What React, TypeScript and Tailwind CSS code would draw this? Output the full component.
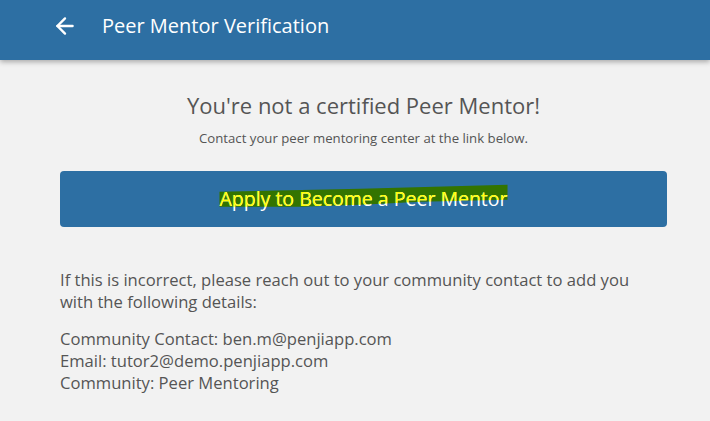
import { ArrowLeft } from 'lucide-react';

const font = { fontFamily: '"Open Sans", Lato, sans-serif' };

// marker-style highlight drawn over the button label
function ApplyButton() {
  const label = 'Apply to Become a Peer Mentor';
  const marker =
    'polygon(0% 8px, 49% 5px, 100% 1px, 100% 16px, 70% 18px, 49% 21px, 28% 23px, 0% 23px)';
  const inner =
    'polygon(0% 3px, 49% 0px, 100% -4px, 100% 11px, 70% 13px, 49% 16px, 28% 18px, 0% 18px)';
  return (
    <button className="w-full h-[56px] rounded-[4px] bg-[#2d6fa3] flex items-center justify-center">
      <span className="relative inline-block text-[19.5px] leading-[20px] text-white whitespace-nowrap">
        <span
          className="absolute left-0 right-0 top-[-5px] h-[24px] bg-[#337400]"
          style={{ clipPath: marker }}
        />
        <span className="relative">{label}</span>
        <span className="absolute inset-0 text-[#ffff00]" style={{ clipPath: inner }}>
          {label}
        </span>
      </span>
    </button>
  );
}

export default function App() {
  return (
    <div className="min-h-[421px] bg-[#f2f2f2] text-[#555]" style={font}>
      <header className="h-[60px] bg-[#2d6fa3] flex items-center shadow-[0_2px_5px_rgba(0,0,0,0.3)]">
        <ArrowLeft className="ml-[52px] -mt-[9px] w-[26px] h-[26px] text-white" strokeWidth={2.2} />
        <h1 className="ml-[24px] text-[20px] text-white -mt-[9px]">Peer Mentor Verification</h1>
      </header>

      <main className="pl-[60px] w-[667px]">
        <h2 className="mt-[31px] text-center text-[22px] leading-[28px]">
          You're not a certified Peer Mentor!
        </h2>
        <p className="mt-[10px] text-center text-[13.2px]">
          Contact your peer mentoring center at the link below.
        </p>

        <div className="mt-[22px]">
          <ApplyButton />
        </div>

        <div className="mt-[42px] text-[16.6px] leading-[22px]">
          <p>
            If this is incorrect, please reach out to your community contact to add you
            <br />
            with the following details:
          </p>
          <div className="mt-[15px]">
            <div>Community Contact: ben.m@penjiapp.com</div>
            <div>Email: tutor2@demo.penjiapp.com</div>
            <div>Community: Peer Mentoring</div>
          </div>
        </div>
      </main>
    </div>
  );
}
